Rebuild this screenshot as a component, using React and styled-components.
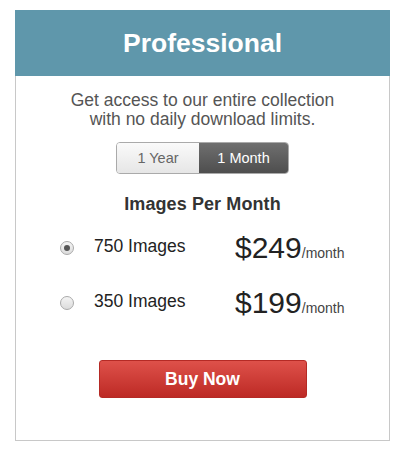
import React, { useState } from "react";
import styled, { createGlobalStyle } from "styled-components";

const Global = createGlobalStyle`
  body {
    margin: 0;
    background: #fff;
    font-family: "Liberation Sans", Arial, sans-serif;
  }
`;

const Page = styled.div`
  padding: 10px 11px 10px 15px;
`;

const Card = styled.div`
  width: 373px;
  height: 430px;
  border: 1px solid #c8c8c8;
  border-top: none;
  display: flex;
  flex-direction: column;
  align-items: center;
`;

const Header = styled.div`
  align-self: stretch;
  height: 66px;
  margin: 0 -1px;
  background: #5f97ab;
  color: #fff;
  display: flex;
  align-items: center;
  justify-content: center;
  font-size: 26.5px;
  font-weight: bold;
`;

const Intro = styled.p`
  margin: 15px 0 0;
  text-align: center;
  font-size: 17.5px;
  line-height: 19px;
  color: #555;
`;

const Toggle = styled.div`
  display: flex;
  margin-top: 13px;
  border: 1px solid #aaa;
  border-radius: 4px;
  overflow: hidden;
`;

const ToggleBtn = styled.button`
  border: none;
  outline: none;
  height: 30px;
  width: ${(p) => p.$w}px;
  font-family: inherit;
  font-size: 14.5px;
  cursor: pointer;
  color: ${(p) => (p.$active ? "#fff" : "#666")};
  background: ${(p) =>
    p.$active
      ? "linear-gradient(#6f6f6f, #4e4e4e)"
      : "linear-gradient(#fafafa, #e6e6e6)"};
`;

const Subtitle = styled.h3`
  margin: 20px 0 0;
  font-size: 18px;
  font-weight: bold;
  color: #333;
  letter-spacing: 0.1px;
`;

const Options = styled.div`
  align-self: stretch;
  margin-top: 16px;
  display: flex;
  flex-direction: column;
  gap: 21px;
`;

const Row = styled.label`
  display: grid;
  grid-template-columns: 35px 140px auto;
  align-items: center;
  padding-left: 44px;
  height: 34px;
  cursor: pointer;
`;

const Radio = styled.span`
  width: 12px;
  height: 12px;
  border-radius: 50%;
  border: 1px solid #aaa;
  background: linear-gradient(#f4f4f4, #dcdcdc);
  display: flex;
  align-items: center;
  justify-content: center;
  &::after {
    content: "";
    width: 6px;
    height: 6px;
    border-radius: 50%;
    background: ${(p) => (p.$checked ? "#555" : "transparent")};
  }
`;

const Label = styled.span`
  font-size: 17.5px;
  color: #222;
  margin-top: -4px;
  margin-left: -1px;
`;

const Price = styled.span`
  font-size: 30px;
  color: #222;
  white-space: nowrap;
`;

const Per = styled.span`
  font-size: 14px;
  color: #444;
`;

const BuyButton = styled.button`
  margin-top: 40px;
  width: 208px;
  height: 38px;
  border: 1px solid #b52a25;
  border-radius: 3px;
  background: linear-gradient(#de514a, #bd2a25);
  color: #fff;
  font-family: inherit;
  font-size: 17.5px;
  font-weight: bold;
  cursor: pointer;
`;

const plans = [
  { id: 750, label: "750 Images", price: "$249" },
  { id: 350, label: "350 Images", price: "$199" },
];

export default function App() {
  const [period, setPeriod] = useState("month");
  const [plan, setPlan] = useState(750);

  return (
    <Page>
      <Global />
      <Card>
        <Header>Professional</Header>
        <Intro>
          Get access to our entire collection
          <br />
          with no daily download limits.
        </Intro>
        <Toggle>
          <ToggleBtn $w={82} $active={period === "year"} onClick={() => setPeriod("year")}>
            1 Year
          </ToggleBtn>
          <ToggleBtn $w={89} $active={period === "month"} onClick={() => setPeriod("month")}>
            1 Month
          </ToggleBtn>
        </Toggle>
        <Subtitle>Images Per Month</Subtitle>
        <Options>
          {plans.map((p) => (
            <Row key={p.id} onClick={() => setPlan(p.id)}>
              <Radio $checked={plan === p.id} />
              <Label>{p.label}</Label>
              <Price>
                {p.price}
                <Per>/month</Per>
              </Price>
            </Row>
          ))}
        </Options>
        <BuyButton>Buy Now</BuyButton>
      </Card>
    </Page>
  );
}
